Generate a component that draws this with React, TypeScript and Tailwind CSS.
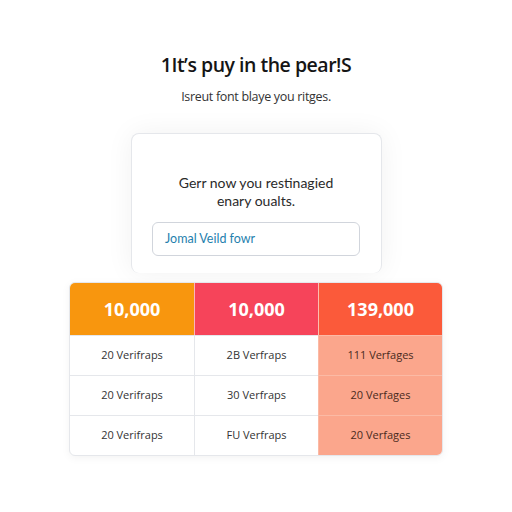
const rows = [
  ["20 Verifraps", "2B Verfraps", "111 Verfages"],
  ["20 Verifraps", "30 Verfraps", "20 Verfages"],
  ["20 Verifraps", "FU Verfraps", "20 Verfages"],
];

export default function App() {
  return (
    <div
      className="flex h-[512px] w-[512px] flex-col items-center bg-white"
      style={{ fontFamily: '"Open Sans", "Noto Sans", sans-serif' }}
    >
      <h1 className="mt-[52px] text-[19.5px] font-semibold leading-[26px] tracking-tight text-[#151515]">
        1It’s puy in the pear!S
      </h1>
      <p className="mt-[10px] text-[12.5px] leading-[18px] tracking-tight text-[#333]">
        Isreut font blaye you ritges.
      </p>

      <div className="mt-[27px] flex h-[140px] w-[251px] flex-col items-center rounded-lg border border-b-0 border-gray-200 bg-white shadow-[0_0_28px_rgba(0,0,0,0.06)]">
        <p
          className="mt-[40px] text-center text-[14px] leading-[18px] text-[#2a2a2a]"
          style={{ fontFamily: 'Lato, "Open Sans", sans-serif' }}
        >
          Gerr now you restinagied
          <br />
          enary oualts.
        </p>
        <div className="mt-[12px] flex h-[34px] w-[208px] items-center rounded-md border border-gray-300 px-3">
          <span
            className="text-[12.5px] text-[#1f7fae]"
            style={{ fontFamily: 'Lato, "Open Sans", sans-serif' }}
          >
            Jomal Veild fowr
          </span>
        </div>
      </div>

      <div className="mt-[9px] grid w-[374px] grid-cols-3 overflow-hidden rounded-md border border-gray-200 bg-white shadow-[0_2px_8px_rgba(0,0,0,0.05)]">
        <div className="flex h-[52px] items-center justify-center bg-[#f8960e] text-[18px] font-bold text-white">
          10,000
        </div>
        <div className="flex h-[52px] items-center justify-center border-l border-white/60 bg-[#f6445a] text-[18px] font-bold text-white">
          10,000
        </div>
        <div className="flex h-[52px] items-center justify-center border-l border-white/60 bg-[#fb5a3a] text-[18px] font-bold text-white">
          139,000
        </div>
        {rows.map((r, i) => (
          <div key={i} className="contents">
            <div className="flex h-[40px] items-center justify-center border-t border-gray-200 text-[11px] text-[#333]">
              {r[0]}
            </div>
            <div className="flex h-[40px] items-center justify-center border-l border-t border-gray-200 text-[11px] text-[#333]">
              {r[1]}
            </div>
            <div className="flex h-[40px] items-center justify-center border-l border-t border-[#fbbaa5] bg-[#fba68c] text-[11px] text-[#4a2a20]">
              {r[2]}
            </div>
          </div>
        ))}
      </div>
    </div>
  );
}
